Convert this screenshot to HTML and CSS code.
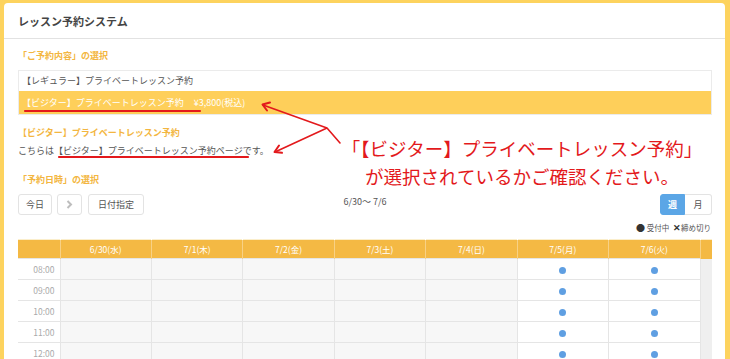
FILE: index.html
```html
<!DOCTYPE html>
<html lang="ja">
<head>
	<meta charset="utf-8">
	<title>レッスン予約システム</title>
	<link rel="stylesheet" href="styles.css">
</head>
<body>
	<div class="panel">
		<div class="panel-head">レッスン予約システム</div>
		<div class="panel-body">
			<p class="sec-title">「ご予約内容」の選択</p>
			<ul class="menu">
				<li>【レギュラー】プライベートレッスン予約</li>
				<li class="active">【ビジター】プライベートレッスン予約<span class="price">¥3,800(税込)</span></li>
			</ul>
			<p class="sec-title plan">【ビジター】プライベートレッスン予約</p>
			<p class="plan-desc">こちらは【ビジター】プライベートレッスン予約ページです。</p>
			<p class="sec-title date">「予約日時」の選択</p>
			<div class="toolbar">
				<div class="btns">
					<button class="btn">今日</button>
					<button class="btn next"><svg width="7" height="9" viewBox="0 0 7 9"><path d="M1.5 1 L5 4.5 L1.5 8" fill="none" stroke="#bdbdbd" stroke-width="2"/></svg></button>
					<button class="btn">日付指定</button>
				</div>
				<div class="range">6/30〜 7/6</div>
				<div class="view">
					<button class="on">週</button><button>月</button>
				</div>
			</div>
			<div class="legend"><b class="dot-mark">●</b> 受付中 <b class="x-mark">✕</b>締め切り</div>
			<table class="cal">
				<colgroup>
					<col class="c-time">
					<col><col><col><col><col><col><col>
					<col class="c-bar">
				</colgroup>
				<tr class="head">
					<th></th>
					<th>6/30(水)</th>
					<th>7/1(木)</th>
					<th>7/2(金)</th>
					<th>7/3(土)</th>
					<th>7/4(日)</th>
					<th>7/5(月)</th>
					<th>7/6(火)</th>
					<th class="bar"></th>
				</tr>
				<tr>
					<td class="time">08:00</td>
					<td class="past"></td><td class="past"></td><td class="past"></td><td class="past"></td><td class="past"></td>
					<td><span class="dot"></span></td><td><span class="dot"></span></td>
					<td class="bar"></td>
				</tr>
				<tr>
					<td class="time">09:00</td>
					<td class="past"></td><td class="past"></td><td class="past"></td><td class="past"></td><td class="past"></td>
					<td><span class="dot"></span></td><td><span class="dot"></span></td>
					<td class="bar"></td>
				</tr>
				<tr>
					<td class="time">10:00</td>
					<td class="past"></td><td class="past"></td><td class="past"></td><td class="past"></td><td class="past"></td>
					<td><span class="dot"></span></td><td><span class="dot"></span></td>
					<td class="bar"></td>
				</tr>
				<tr>
					<td class="time">11:00</td>
					<td class="past"></td><td class="past"></td><td class="past"></td><td class="past"></td><td class="past"></td>
					<td><span class="dot"></span></td><td><span class="dot"></span></td>
					<td class="bar"></td>
				</tr>
				<tr>
					<td class="time">12:00</td>
					<td class="past"></td><td class="past"></td><td class="past"></td><td class="past"></td><td class="past"></td>
					<td><span class="dot"></span></td><td><span class="dot"></span></td>
					<td class="bar"></td>
				</tr>
			</table>
		</div>
	</div>

	<!-- 注釈 -->
	<div class="note">「【ビジター】プライベートレッスン予約」<br>が選択されているかご確認ください。</div>
	<svg class="marks" width="730" height="359" viewBox="0 0 730 359">
		<g fill="none" stroke="#e3191c" stroke-linecap="round" stroke-linejoin="round">
			<path d="M25 111 H200" stroke-width="2.2"/>
			<path d="M59 157 H248" stroke-width="2.2"/>
			<path d="M327 128 L263 105 M327 128 L275 152 M327 128 L340 143" stroke-width="1.6"/>
			<path d="M267 110.5 L262.5 104.5 L270 102.5" stroke-width="2"/>
			<path d="M279 145.5 L274.5 152 L282 152.8" stroke-width="2"/>
		</g>
	</svg>
</body>
</html>
```

FILE: styles.css
```css
*{
	box-sizing: border-box;
}
html,body{
	overflow: hidden;
}
body{
	margin: 0;
	background-color: #fdd35e;
	font-family: "Noto Sans CJK JP", "Noto Sans", sans-serif;
	color: #555;
	position: relative;
}
.panel{
	margin: 3px 5px 0 4px;
	background-color: #fff;
	border-radius: 4px 4px 0 0;
	min-height: 400px;
}
.panel-head{
	height: 36px;
	line-height: 36px;
	padding: 0 14px;
	font-size: 11px;
	font-weight: bold;
	color: #444;
	border-bottom: 1px solid #e2e2e2;
}
.panel-body{
	padding: 11px 13px 0 14px;
}
.sec-title{
	margin: 0;
	font-size: 9px;
	line-height: 12px;
	font-weight: bold;
	color: #f3b641;
}
.menu{
	list-style: none;
	margin: 8px 0 0;
	padding: 0;
	border: 1px solid #ebebeb;
}
.menu li{
	height: 20px;
	line-height: 20px;
	padding-left: 3px;
	font-size: 9px;
	color: #555;
}
.menu li.active{
	height: 23px;
	line-height: 23px;
	background-color: #fecf5a;
	color: #fff;
}
.price{
	margin-left: 10px;
}
.plan{
	margin-top: 12px;
}
.plan-desc{
	margin: 6px 0 0;
	font-size: 9px;
	line-height: 12px;
	color: #555;
}
.date{
	margin-top: 17px;
}
.toolbar{
	margin-top: 8px;
	display: grid;
	grid-template-columns: 1fr auto 1fr;
}
.btns{
	display: flex;
	gap: 5px;
}
.btn{
	height: 21px;
	padding: 0 7px;
	border: 1px solid #e3e3e3;
	border-radius: 3px;
	background-color: #fff;
	font-family: inherit;
	font-size: 9px;
	color: #555;
}
.btn.next{
	width: 25px;
	padding: 0;
	display: flex;
	align-items: center;
	justify-content: center;
}
.btn.next + .btn{
	margin-left: 1px;
	padding: 0 9px;
}
.range{
	font-size: 9px;
	line-height: 14px;
	margin-top: 1px;
	color: #555;
}
.view{
	justify-self: end;
	display: flex;
}
.view button{
	height: 21px;
	width: 27px;
	padding: 0;
	border: 1px solid #e3e3e3;
	border-left: none;
	border-radius: 0 3px 3px 0;
	background-color: #fff;
	font-family: inherit;
	font-size: 9px;
	color: #555;
}
.view button.on{
	width: 25px;
	border: 1px solid #5ba6e6;
	border-radius: 3px 0 0 3px;
	background-color: #5ba6e6;
	color: #fff;
	font-weight: bold;
}
.legend{
	margin-top: 7px;
	text-align: right;
	font-size: 7.5px;
	line-height: 12px;
	color: #555;
	padding-right: 1px;
}
.dot-mark{
	font-size: 9px;
	color: #333;
}
.x-mark{
	font-size: 9px;
	color: #333;
	margin-left: 2px;
}
.cal{
	margin-top: 5px;
	width: 100%;
	table-layout: fixed;
	border-collapse: collapse;
	border-top: 1px solid #fbeecb;
	font-size: 8.5px;
	line-height: 1;
}
.c-time{
	width: 42px;
}
.c-bar{
	width: 12px;
}
.cal th{
	height: 19px;
	padding: 0;
	background-color: #f4b944;
	color: #fff;
	font-weight: normal;
	border-left: 1px solid rgba(255,255,255,0.35);
}
.cal th:first-child{
	border-left: none;
}
.cal td{
	height: 21px;
	padding: 0;
	border: 1px solid #e5e5e5;
	text-align: center;
	background-color: #fff;
}
.cal td.time{
	text-align: right;
	padding-right: 5px;
	color: #aaa;
	border-left: none;
}
.cal td.past{
	background-color: #f7f7f7;
}
.cal td.bar{
	background-color: #efefef;
	border: none;
}
.dot{
	display: inline-block;
	width: 7px;
	height: 7px;
	border-radius: 50%;
	background-color: #5f9fe2;
	vertical-align: middle;
}
.note{
	position: absolute;
	left: 337px;
	top: 134px;
	width: 370px;
	text-align: center;
	font-size: 18.5px;
	line-height: 28px;
	color: #e3191c;
}
.marks{
	position: absolute;
	left: 0;
	top: 0;
	pointer-events: none;
}
```
